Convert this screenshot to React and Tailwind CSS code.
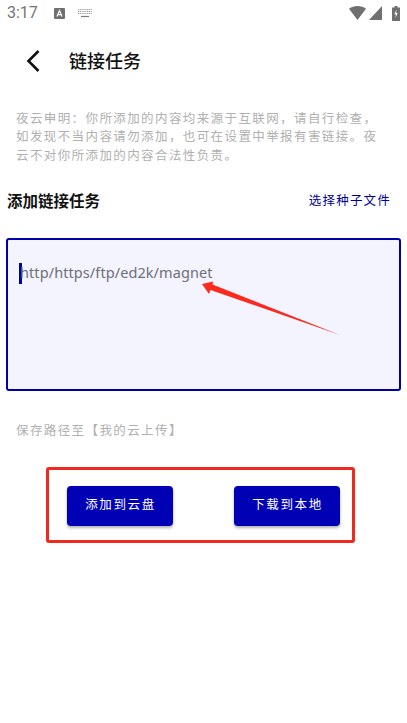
const cjk = '"Noto Sans", "Noto Sans CJK SC", sans-serif'

function StatusBar() {
  return (
    <div className="flex h-[26px] items-center justify-between pl-[7px] pr-[7px] text-[#757575]">
      <div className="flex items-center">
        <span className="text-[16px] leading-none" style={{ fontFamily: 'Roboto, sans-serif' }}>3:17</span>
        <svg width="11" height="11" viewBox="0 0 11 11" className="ml-[16px]">
          <rect width="11" height="11" rx="1" fill="#6f6f6f" />
          <path d="M3 8.5 5.5 2.5 8 8.5M4 6.7h3" stroke="#fff" strokeWidth="1.2" fill="none" />
        </svg>
        <svg width="14" height="9" viewBox="0 0 14 9" className="ml-[13px]">
          <path d="M0 .5h14M0 2.5h14M0 4.5h14" stroke="#a0a0a0" strokeWidth="1" strokeDasharray="1.2 .6" />
          <path d="M3 7.5h8" stroke="#7a7a7a" strokeWidth="1.2" />
        </svg>
      </div>
      <div className="flex items-center">
        <svg width="17" height="14" viewBox="0 0 17 14"><path d="M0 2.8C4.5-.9 12.5-.9 17 2.8L8.5 14Z" fill="#6f6f6f" /></svg>
        <svg width="13" height="14" viewBox="0 0 13 14" className="ml-[3px]"><path d="M13 0V14H0Z" fill="#6f6f6f" /></svg>
        <svg width="8" height="15" viewBox="0 0 8 15" className="ml-[10px]">
          <path d="M2.5 0h3v1.5H8V15H0V1.5h2.5Z" fill="#6f6f6f" />
          <path d="M4.6 3.5 2.4 8.3h1.5L3.4 12 5.7 6.9H4.1Z" fill="#fff" />
        </svg>
      </div>
    </div>
  )
}

function Header() {
  return (
    <div className="mt-[11px] flex h-[48px] items-center pl-[26px]">
      <svg width="14" height="24" viewBox="0 0 14 24" fill="none">
        <path d="M12.5 2 2.5 12 12.5 22" stroke="#111" strokeWidth="2.6" />
      </svg>
      <h1 className="ml-[29px] text-[18px] font-medium leading-none text-[#111]">链接任务</h1>
    </div>
  )
}

export default function App() {
  return (
    <div className="h-[723px] w-[407px] overflow-hidden bg-white" style={{ fontFamily: cjk }}>
      <StatusBar />
      <Header />

      <p className="mt-[25px] pl-[16px] pr-[20px] text-[12.5px] leading-[18.4px] tracking-[1.4px] text-[#b0b0b0]">
        夜云申明：你所添加的内容均来源于互联网，请自行检查，如发现不当内容请勿添加，也可在设置中举报有害链接。夜云不对你所添加的内容合法性负责。
      </p>

      <div className="mt-[24px] flex items-center justify-between pl-[7px] pr-[16px]">
        <h2 className="text-[15.5px] font-bold leading-[24px] text-[#111]">添加链接任务</h2>
        <button type="button" className="text-[12.5px] leading-[24px] tracking-[1.2px] text-[#000099]">选择种子文件</button>
      </div>

      <div className="relative mx-[6px] mt-[25px] h-[153px] rounded-[3px] border-2 border-[#0000a8] bg-[#f3f4ff] pl-[11px] pt-[22px]">
        <div className="flex h-[22px] items-center">
          <span className="h-[21px] w-[3px] bg-[#0000a8]" />
          <span className="-ml-[2px] text-[14.5px] tracking-[0.08px] text-[#6f6f76]">http/https/ftp/ed2k/magnet</span>
        </div>
        <svg width="142" height="62" viewBox="0 0 142 62" className="absolute left-[192px] top-[37px]">
          <path d="M2 7 13 4.5 12.5 7.5 140 58 10.5 13 9 17Z" fill="#fb2a1c" />
        </svg>
      </div>

      <p className="mt-[30px] pl-[16px] text-[12.5px] leading-[20px] tracking-[1.4px] text-[#b0b0b0]">保存路径至【我的云上传】</p>

      <div className="ml-[46px] mt-[26px] flex h-[76px] w-[309px] items-center justify-between rounded-[3px] border-[3px] border-[#f0291f] pl-[18px] pr-[12px] pt-[1px]">
        <button type="button" className="h-[40px] w-[106px] rounded-[4px] bg-[#0000b4] pl-[1px] text-[12.5px] tracking-[1.6px] text-white shadow-[0_2px_3px_rgba(0,0,0,0.3)]">添加到云盘</button>
        <button type="button" className="h-[40px] w-[106px] rounded-[4px] bg-[#0000b4] pl-[1px] text-[12.5px] tracking-[1.6px] text-white shadow-[0_2px_3px_rgba(0,0,0,0.3)]">下载到本地</button>
      </div>
    </div>
  )
}
